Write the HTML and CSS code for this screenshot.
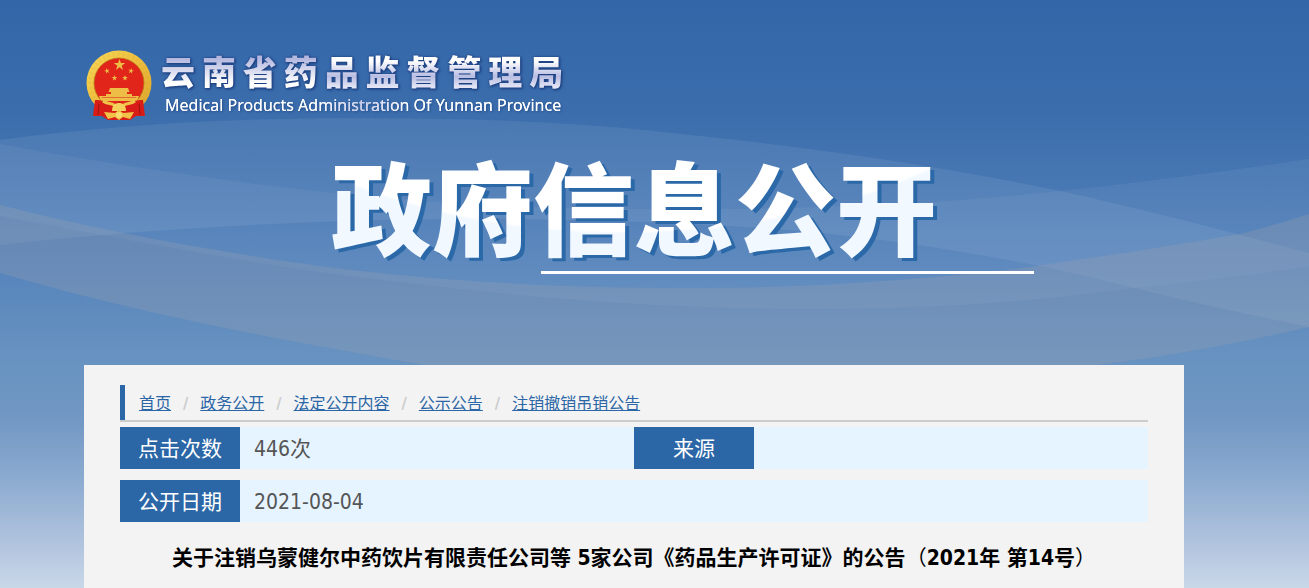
FILE: index.html
```html
<!DOCTYPE html>
<html lang="zh-CN">
<head>
    <meta charset="UTF-8">
    <meta name="viewport" content="width=device-width, initial-scale=1.0">
    <title>云南省药品监督管理局 - 政府信息公开</title>
    <link rel="stylesheet" href="styles.css">
</head>
<body>
    <svg class="waves" viewBox="0 0 1309 365" preserveAspectRatio="none" aria-hidden="true">
        <path fill="#fff" fill-opacity="0.07" d="M0 140C110 125 230 118 354 118C460 118 560 121 654 131C800 146 930 164 1060 191C1150 211 1230 232 1309 253V327C1250 315 1190 302 1135 288C1040 263 920 243 821 233C740 225 640 221 520 219C340 217 140 229 0 245Z"/>
        <path fill="#fff" fill-opacity="0.05" d="M0 144C110 164 220 181 334 193C440 204 540 209 654 209C800 210 940 204 1060 191C1150 182 1240 169 1309 159V266C1250 275 1190 282 1135 288C1040 301 930 309 821 309C640 309 500 295 350 276C220 259 110 236 0 216Z"/>
        <path fill="#a3a3ac" fill-opacity="0.25" d="M0 205C90 228 190 247 292 262C420 281 560 288 690 288C810 288 920 280 1022 268C1100 257 1170 246 1240 234C1270 226 1290 220 1309 214V327C1240 343 1170 356 1097 365H425C280 340 140 314 0 273Z"/>
    </svg>

    <header class="header">
        <a class="logo" href="#">
            <svg class="emblem" viewBox="0 0 66 70" aria-hidden="true">
                <defs>
                    <linearGradient id="gold" x1="0" y1="0" x2="1" y2="1">
                        <stop offset="0" stop-color="#f8d95a"/>
                        <stop offset="0.5" stop-color="#edbd3c"/>
                        <stop offset="1" stop-color="#dba42c"/>
                    </linearGradient>
                    <path id="star" d="M0-6L1.4-1.9H5.7L2.2 .7L3.5 4.9L0 2.3L-3.5 4.9L-2.2 .7L-5.7-1.9H-1.4Z"/>
                </defs>
                <circle cx="33" cy="33" r="32.500" fill="url(#gold)"/>
                <circle cx="33" cy="33" r="29" fill="none" stroke="#cf982a" stroke-opacity="0.12" stroke-width="4" stroke-dasharray="2 3"/>
                <circle cx="33" cy="33" r="25" fill="#e1251b" stroke="#b97719" stroke-width="0.800"/>
                <g fill="#eebd45">
                    <use href="#star" x="33.500" y="15"/>
                    <use href="#star" transform="translate(21 21) rotate(-15) scale(.5)"/>
                    <use href="#star" transform="translate(45 21) rotate(15) scale(.5)"/>
                    <use href="#star" transform="translate(28.500 28) scale(.5)"/>
                    <use href="#star" transform="translate(39 28) scale(.5)"/>
                    <path d="M24 38H42L43.500 42H41V44H25V42H22.500ZM20 44H46V46H53L51 51H15L13 46H20Z"/>
                </g>
                <path stroke="#d81d18" stroke-opacity="0.5" stroke-width="1" d="M16 47.500H50"/>
                <path fill="#d81d18" d="M9 50C15 50 23 52 28 55L33 51L38 55C43 52 51 50 57 50L59 66L50 66L44 70H22L16 66L7 66Z"/>
                <path fill="none" stroke="#f0c248" stroke-width="3" d="M17 51C21 54 25 53 28 55L33 61L38 55C41 53 45 54 49 51"/>
                <path fill="#f5d05a" d="M26 61C26 55 29 53 33 53S40 55 40 61Z"/>
                <path fill="#f0c248" d="M18 62L29 63L33 60L37 63L48 62L44 69L37 67L33 70L29 67L22 69Z"/>
                <circle cx="33" cy="65" r="3" fill="#f8dc70"/>
                <path stroke="#9e1010" stroke-width="1" fill="none" d="M13 54L12 65M53 54L54 65"/>
            </svg>
            <span class="logo-text">
                <span class="logo-cn">云南省药品监督管理局</span>
                <span class="logo-en">Medical Products Administration Of Yunnan Province</span>
            </span>
        </a>
        <h1 class="banner-title">政府信息公开</h1>
        <div class="banner-line"></div>
    </header>

    <main class="panel">
        <nav class="crumb-bar">
            <ol class="breadcrumb">
                <li><a href="#">首页</a></li>
                <li><a href="#">政务公开</a></li>
                <li><a href="#">法定公开内容</a></li>
                <li><a href="#">公示公告</a></li>
                <li><a href="#">注销撤销吊销公告</a></li>
            </ol>
        </nav>

        <dl class="info">
            <dt>点击次数</dt>
            <dd>446次</dd>
            <dt>来源</dt>
            <dd></dd>
            <dt>公开日期</dt>
            <dd class="wide">2021-08-04</dd>
        </dl>

        <h2 class="article-title">关于注销乌蒙健尔中药饮片有限责任公司等 5家公司《药品生产许可证》的公告<span class="paren">（</span>2021年 第14号<span class="paren">）</span></h2>
    </main>
</body>
</html>
```
FILE: styles.css
```css
* {
    box-sizing: border-box;
}

body {
    position: relative;
    display: flex;
    flex-direction: column;
    min-height: 100vh;
    margin: 0;
    padding: 0 125px 0 84px;
    font-family: "DejaVu Sans Condensed", "Noto Sans CJK SC", sans-serif;
    background: #c9d8e8 linear-gradient(#3266a8 0, #3b6dac 110px, #5583bb 260px, #6691c0 350px, #7298c4 420px, #8cabd0 480px, #afc2dd 540px, #c9d8e8 588px) no-repeat;
}

.waves {
    position: absolute;
    top: 0;
    left: 0;
    width: 100%;
    height: 365px;
}

.header {
    position: relative;
    height: 365px;
    padding-top: 50px;
}

.logo {
    display: inline-flex;
    gap: 9px;
    padding-left: 2px;
    text-decoration: none;
}

.emblem {
    width: 66px;
    height: 70px;
}

.logo-text {
    display: flex;
    flex-direction: column;
}

/* the name is spread over the width of the English line */
.logo-cn {
    height: 44px;
    line-height: 42px;
    font-family: "Noto Sans CJK SC", sans-serif;
    font-size: 34px;
    font-weight: 900;
    text-align-last: justify;
    color: transparent;
    background: linear-gradient(#b4b8df 20%, #fff 75%) left / 40% 100% no-repeat,
                linear-gradient(#fff 25%, #b9bde2 60%, #e4e6f5 85%) right / 60% 100% no-repeat;
    -webkit-background-clip: text;
    background-clip: text;
    filter: drop-shadow(0 0 1px #1c3f80) drop-shadow(1px 1px 1px #1c3f80);
}

.logo-en {
    padding: 0 2px 0 4px;
    line-height: 22px;
    font-family: "Noto Sans", sans-serif;
    font-size: 16px;
    font-weight: 400;
    white-space: nowrap;
    color: transparent;
    background: linear-gradient(90deg, #fff 38%, #c5c8ea 50%, #fff 62%);
    -webkit-background-clip: text;
    background-clip: text;
    filter: drop-shadow(0 0 0 #fff) drop-shadow(1px 1px 1px #27508f);
}

.banner-title {
    margin: 24px 0 0;
    height: 123px;
    line-height: 112px;
    text-align: center;
    font-family: "Noto Sans CJK SC", sans-serif;
    font-size: 101px;
    font-weight: 900;
    color: transparent;
    background: radial-gradient(ellipse 500px 300px at 49% -214px, #fff 99%, #f1f8ff 100%);
    -webkit-background-clip: text;
    background-clip: text;
    filter: drop-shadow(4px 3px 0 #2b68a8);
}

.banner-line {
    width: 493px;
    max-width: 100%;
    height: 3px;
    margin: 0 150px 0 auto;
    background: #fff;
}

.panel {
    position: relative;
    flex: 1;
    padding: 20px 36px;
    background: #f3f3f3;
}

.crumb-bar {
    border-bottom: 2px solid #ccc;
}

.breadcrumb {
    display: flex;
    height: 35px;
    margin: 0;
    padding: 0 0 0 14px;
    list-style: none;
    border-left: 5px solid #2b66a6;
    font-size: 16px;
    line-height: 38px;
}

.breadcrumb li + li::before {
    content: "/";
    padding: 0 12px;
    color: #ccc;
    font-weight: bold;
}

.breadcrumb a {
    color: #2b66a6;
}

.info {
    display: grid;
    grid-template-columns: 120px 1fr 120px 1fr;
    row-gap: 11px;
    margin: 5px 0 0;
    font-size: 21px;
    line-height: 44px;
}

.info dt {
    height: 42px;
    text-align: center;
    color: #fff;
    background: #2b66a6;
}

.info dd {
    height: 42px;
    margin: 0;
    padding-left: 14px;
    color: #555;
    background: #e6f4ff;
}

.info .wide {
    grid-column: span 3;
}

.article-title {
    margin: 18px 0 0;
    font-size: 21px;
    line-height: 32px;
    text-align: center;
    color: #000;
}

.paren {
    font-family: "Noto Sans CJK TC", sans-serif;
    font-weight: 400;
}
```
